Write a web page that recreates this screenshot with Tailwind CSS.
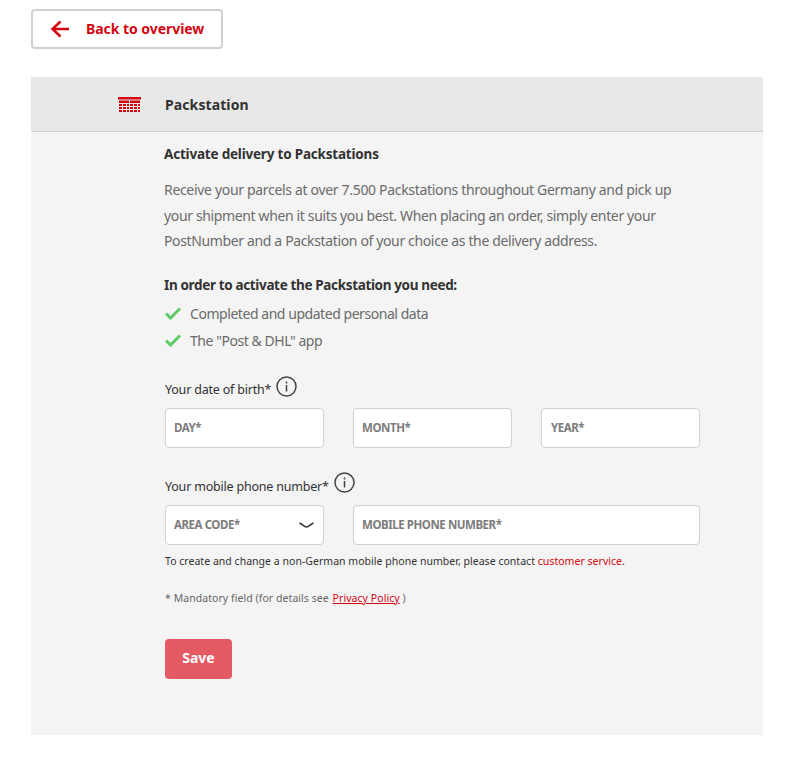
<!DOCTYPE html>
<html lang="en">
<head>
  <meta charset="UTF-8" />
  <meta name="viewport" content="width=device-width, initial-scale=1" />
  <title>Packstation</title>
  <script src="https://cdn.jsdelivr.net/npm/@tailwindcss/browser@4"></script>
</head>
<body class="bg-white h-[760px] overflow-hidden font-['Noto_Sans',sans-serif] text-[#323232]">
  <div class="pl-[31px] pt-[9px] w-[763px]">
    <!-- back link -->
    <a class="flex items-center w-[192px] h-[40px] bg-white border-2 border-[#d1d1d1] rounded-[4px] pl-[17px]">
      <svg class="w-[19px] h-[18px]" viewBox="0 0 19 18" fill="none" stroke="#d40511" stroke-width="2.500">
        <path d="M19 9H3M10.500 1.500L2.500 9l8 7.500" />
      </svg>
      <span class="ml-[17px] mb-[2px] text-[14px] font-bold tracking-[-0.05px] text-[#d40511]">Back to overview</span>
    </a>

    <div class="mt-[28px] bg-[#f4f4f4] h-[658px]">
      <!-- header -->
      <div class="flex items-center h-[55px] bg-[#e8e8e8] border-b border-[#cfcfcf]">
        <svg class="ml-[87px] w-[23px] h-[15px]" viewBox="0 0 23 15">
          <path fill="#d40511" d="M0 0h23v2.500H0zM1 3.500h10V6H1zM12 3.500h10V6H12zM1 7h3v2H1zM5 7h3v2H5zM9 7h2v2H9zM12 7h3v2h-3zM16 7h3v2h-3zM20 7h2v2h-2zM1 10h3v2H1zM5 10h3v2H5zM9 10h2v2H9zM12 10h3v2h-3zM16 10h3v2h-3zM20 10h2v2h-2zM1 13h3v2H1zM5 13h3v2H5zM9 13h2v2H9zM12 13h3v2h-3zM16 13h3v2h-3zM20 13h2v2h-2z" />
        </svg>
        <h2 class="ml-[24px] text-[14px] font-bold tracking-[0.1px]">Packstation</h2>
      </div>

      <!-- content -->
      <div class="pl-[134px] w-[669px]">
        <h3 class="mt-[12px] -ml-[1px] text-[13.5px] leading-[20px] font-bold tracking-[-0.2px]">Activate delivery to Packstations</h3>
        <p class="mt-[13px] -ml-[1px] text-[14px] leading-[25.5px] text-[#6b6b6b] whitespace-nowrap">
          <span class="block tracking-[-0.32px]">Receive your parcels at over 7.500 Packstations throughout Germany and pick up</span>
          <span class="block tracking-[-0.36px]">your shipment when it suits you best. When placing an order, simply enter your</span>
          <span class="block tracking-[-0.36px]">PostNumber and a Packstation of your choice as the delivery address.</span>
        </p>

        <h3 class="mt-[21.5px] -ml-[1px] text-[13.5px] leading-[20px] font-bold tracking-[-0.35px]">In order to activate the Packstation you need:</h3>
        <ul class="mt-[5px] text-[14px] tracking-[-0.45px] text-[#6b6b6b]">
          <li class="flex items-center h-[27px]">
            <svg class="w-[16px] h-[13px]" viewBox="0 0 16 13" fill="none" stroke="#5ecb64" stroke-width="3"><path d="M1 6.500l4.500 4.500L15 1.500" /></svg>
            <span class="ml-[9px]">Completed and updated personal data</span>
          </li>
          <li class="flex items-center h-[27px]">
            <svg class="w-[16px] h-[13px]" viewBox="0 0 16 13" fill="none" stroke="#5ecb64" stroke-width="3"><path d="M1 6.500l4.500 4.500L15 1.500" /></svg>
            <span class="ml-[9px]">The "Post &amp; DHL" app</span>
          </li>
        </ul>

        <!-- date of birth -->
        <div class="mt-[23px] flex items-center h-[24px] text-[12.5px] tracking-[-0.2px]">
          <span class="mt-[2px]">Your date of birth*</span>
          <svg class="ml-[5px] mb-[6px] w-[21px] h-[21px]" viewBox="0 0 21 21" fill="none" stroke="#444" stroke-width="1.500">
            <circle cx="10.500" cy="10.500" r="9.500" /><path d="M10.500 9v6.500M10.500 5.500v2" />
          </svg>
        </div>
        <div class="mt-[7px] flex gap-[29px]">
          <div class="w-[159px] h-[40px] bg-white border border-[#d1d1d1] rounded-[4px] flex items-center pl-[8px] text-[11.500px] tracking-[-0.45px] font-bold text-[#7c7c7c]">DAY*</div>
          <div class="w-[159px] h-[40px] bg-white border border-[#d1d1d1] rounded-[4px] flex items-center pl-[8px] text-[11.500px] tracking-[-0.45px] font-bold text-[#7c7c7c]">MONTH*</div>
          <div class="w-[159px] h-[40px] bg-white border border-[#d1d1d1] rounded-[4px] flex items-center pl-[9px] text-[11.500px] tracking-[-0.45px] font-bold text-[#7c7c7c]">YEAR*</div>
        </div>

        <!-- phone -->
        <div class="mt-[26px] flex items-center h-[24px] text-[12.5px] tracking-[-0.2px]">
          <span class="mt-[2px]">Your mobile phone number*</span>
          <svg class="ml-[5px] mb-[8px] w-[21px] h-[21px]" viewBox="0 0 21 21" fill="none" stroke="#444" stroke-width="1.500">
            <circle cx="10.500" cy="10.500" r="9.500" /><path d="M10.500 9v6.500M10.500 5.500v2" />
          </svg>
        </div>
        <div class="mt-[7px] flex gap-[29px]">
          <div class="w-[159px] h-[40px] bg-white border border-[#d1d1d1] rounded-[4px] flex items-center justify-between pl-[8px] pr-[9px] text-[11.500px] tracking-[-0.45px] font-bold text-[#7c7c7c]">
            <span>AREA CODE*</span>
            <svg class="w-[15px] h-[7px]" viewBox="0 0 15 7" fill="none" stroke="#333" stroke-width="1.500"><path d="M.5 1c3 1.500 5 4 7 4s4-2.500 7-4" /></svg>
          </div>
          <div class="w-[347px] h-[40px] bg-white border border-[#d1d1d1] rounded-[4px] flex items-center pl-[8px] text-[11.500px] tracking-[-0.45px] font-bold text-[#7c7c7c]">MOBILE PHONE NUMBER*</div>
        </div>

        <p class="mt-[8px] text-[10.500px] leading-[16px] tracking-[0.03px] whitespace-nowrap">To create and change a non-German mobile phone number, please contact <span class="text-[#d40511]">customer service</span>.</p>
        <p class="mt-[21px] text-[10.500px] leading-[16px] tracking-[0.06px] text-[#666] whitespace-nowrap">* Mandatory field (for details see <a class="ml-[1px] underline text-[#d40511]">Privacy Policy</a> )</p>

        <button class="mt-[33px] w-[67px] h-[40px] pb-[3px] bg-[#e35a63] rounded-[4px] text-white text-[14px] font-bold">Save</button>
      </div>
    </div>
  </div>
</body>
</html>
